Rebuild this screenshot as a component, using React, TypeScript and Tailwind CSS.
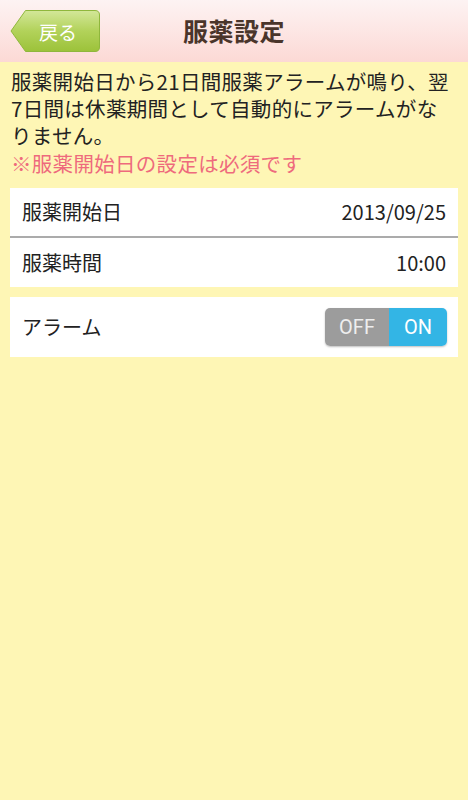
const jp = { fontFamily: '"Noto Sans CJK JP", "Noto Sans", sans-serif' };

function BackButton() {
  return (
    <div className="relative w-[90px] h-[42px] flex items-center justify-center">
      <svg className="absolute inset-0" width="90" height="42" viewBox="0 0 90 42">
        <defs>
          <linearGradient id="back" x1="0" y1="0" x2="0" y2="1">
            <stop offset="0" stopColor="#d3e799" />
            <stop offset="0.5" stopColor="#b2d25a" />
            <stop offset="1" stopColor="#9cc23a" />
          </linearGradient>
        </defs>
        <path
          d="M1 21 L15.5 0.5 H85 Q89.5 0.5 89.5 5 V37 Q89.5 41.5 85 41.5 H15.5 Z"
          fill="url(#back)"
          stroke="#8fb73c"
          strokeWidth="1"
        />
      </svg>
      <span className="relative pl-[6px] text-[19px] text-white leading-none" style={jp}>
        戻る
      </span>
    </div>
  );
}

function Toggle() {
  return (
    <div
      className="flex h-[38px] w-[122px] rounded-[5px] overflow-hidden shadow-[0_1px_2px_rgba(0,0,0,0.25)] text-[20px]"
      style={{ fontFamily: 'Roboto, "Noto Sans", sans-serif' }}
    >
      <div className="w-[64px] bg-[#9c9c9c] text-[#eeeeee] flex items-center justify-center">OFF</div>
      <div className="flex-1 bg-[#33b5e5] text-white flex items-center justify-center">ON</div>
    </div>
  );
}

export default function App() {
  return (
    <div className="w-[468px] h-[800px] bg-[#fef6b5] flex flex-col" style={jp}>
      <header className="h-[62px] bg-gradient-to-b from-[#fdf3f3] to-[#fcd9d5] grid grid-cols-[1fr_auto_1fr] items-center px-[10px]">
        <BackButton />
        <h1 className="text-[25px] font-bold text-[#4a352b] tracking-[0.5px]">服薬設定</h1>
        <div />
      </header>

      <div className="pl-[11px] pr-[8px] pt-[6px]">
        <p className="text-[20.5px] leading-[27px] text-[#222222] tracking-[0.3px]">
          服薬開始日から21日間服薬アラームが鳴り、翌
          <br />
          7日間は休薬期間として自動的にアラームがな
          <br />
          りません。
        </p>
        <p className="text-[20.5px] leading-[28px] text-[#ee6a7d] tracking-[0.3px]">※服薬開始日の設定は必須です</p>
      </div>

      <div className="mx-[10px] mt-[11px] bg-white">
        <div className="h-[48px] flex items-center justify-between px-[12px] text-[20px] text-[#222222]">
          <span>服薬開始日</span>
          <span>2013/09/25</span>
        </div>
        <div className="h-[2px] bg-[#ababab]" />
        <div className="h-[49px] flex items-center justify-between px-[12px] text-[20px] text-[#222222]">
          <span>服薬時間</span>
          <span>10:00</span>
        </div>
      </div>

      <div className="mx-[10px] mt-[10px] bg-white h-[60px] flex items-center justify-between pl-[12px] pr-[11px]">
        <span className="text-[20px] text-[#222222]">アラーム</span>
        <Toggle />
      </div>
    </div>
  );
}
